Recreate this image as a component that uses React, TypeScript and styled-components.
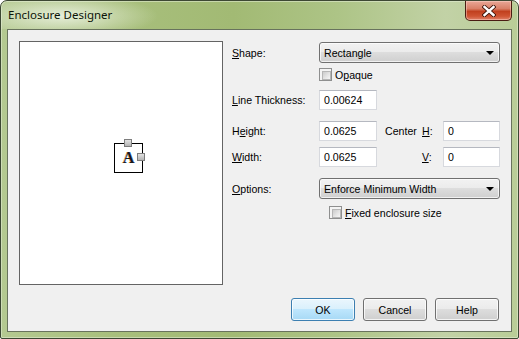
import React from "react";
import styled, { createGlobalStyle } from "styled-components";

const Global = createGlobalStyle`
  html, body { margin: 0; padding: 0; background: #ffffff; }
  body { font-family: "Liberation Sans", Arial, sans-serif; }
  * { box-sizing: border-box; }
`;

const Window = styled.div`
  width: 519px;
  height: 339px;
  border: 1px solid #3d4833;
  border-radius: 7px 7px 2px 2px;
  background: linear-gradient(90deg, #b4c991 0%, #a8bf7c 22%, #a2ba74 45%, #adc486 65%, #c2d2a6 86%, #b9cd97 100%);
  display: flex;
  flex-direction: column;
  overflow: hidden;
  box-shadow: inset 0 0 0 1px rgba(230, 238, 215, 0.55);
`;

const TitleBar = styled.div`
  height: 28px;
  display: flex;
  align-items: flex-start;
  justify-content: space-between;
  padding: 0 6px 0 7px;
  background: radial-gradient(ellipse 95px 22px at 62px 15px, rgba(236, 243, 226, 0.9), rgba(236, 243, 226, 0) 100%);
`;

const Title = styled.div`
  margin-top: 6px;
  font-family: "Noto Sans", "Open Sans", sans-serif;
  font-size: 11.5px;
  color: #0c1408;
`;

const CloseButton = styled.div`
  width: 47px;
  height: 20px;
  border: 1px solid #4a1d12;
  border-top: none;
  border-radius: 0 0 5px 5px;
  background: linear-gradient(180deg, #e9a797 0%, #d98068 40%, #c1401f 55%, #cf5433 80%, #e0826a 100%);
  box-shadow: inset 0 0 0 1px rgba(255, 220, 210, 0.45);
  display: flex;
  align-items: center;
  justify-content: center;
`;

const Client = styled.div`
  margin: 0 6px 6px 6px;
  flex: 1;
  border: 1px solid #68735d;
  background: #f0f0f0;
  padding: 11px 12px 10px 11px;
  display: flex;
  flex-direction: column;
  font-family: "Liberation Sans", Arial, sans-serif;
  font-size: 10.6px;
  color: #000;
`;

const TopArea = styled.div`
  display: flex;
  height: 244px;
`;

const Preview = styled.div`
  position: relative;
  flex-shrink: 0;
  width: 204px;
  height: 244px;
  background: #ffffff;
  border: 1px solid #646464;
`;

const Enclosure = styled.div`
  position: absolute;
  left: 94px;
  top: 101px;
  width: 29px;
  height: 30px;
  border: 1px solid #000;
  display: flex;
  align-items: center;
  justify-content: center;
  font-family: "Liberation Serif", "Times New Roman", serif;
  font-weight: bold;
  font-size: 16px;
  color: #1a1a1a;
  text-shadow: -0.6px 0 0 rgba(220, 120, 0, 0.6), 0.6px 0 0 rgba(0, 90, 220, 0.6);
`;

const Handle = styled.div<{ $x: number; $y: number }>`
  position: absolute;
  left: ${(p) => p.$x}px;
  top: ${(p) => p.$y}px;
  width: 8px;
  height: 8px;
  border: 1px solid #7d7d7d;
  background: linear-gradient(180deg, #e2e2e2 0%, #b4b4b4 100%);
`;

const Form = styled.div`
  margin-left: 9px;
  flex: 1;
  min-width: 0;
  display: flex;
  flex-direction: column;
`;

const Row = styled.div<{ $mt: number; $h: number }>`
  display: flex;
  align-items: center;
  margin-top: ${(p) => p.$mt}px;
  height: ${(p) => p.$h}px;
`;

const Label = styled.div`
  width: 87px;
  flex-shrink: 0;
  white-space: nowrap;
`;

const U = styled.span`
  text-decoration: underline;
  text-underline-offset: 1px;
`;

const Select = styled.div`
  width: 181px;
  flex-shrink: 0;
  height: 21px;
  border: 1px solid #707070;
  border-radius: 3px;
  background: linear-gradient(180deg, #f2f2f2 0%, #ebebeb 49%, #dddddd 50%, #cfcfcf 100%);
  box-shadow: inset 0 0 0 1px rgba(255, 255, 255, 0.7);
  display: flex;
  align-items: center;
  justify-content: space-between;
  padding: 0 5px 0 4px;
`;

const Arrow = styled.div`
  width: 0;
  height: 0;
  border-left: 4px solid transparent;
  border-right: 4px solid transparent;
  border-top: 4px solid #000;
  margin-top: 1px;
`;

const Input = styled.div<{ $w: number }>`
  width: ${(p) => p.$w}px;
  flex-shrink: 0;
  height: 20px;
  background: #fff;
  border: 1px solid #d7d9de;
  border-top-color: #b5b8c0;
  display: flex;
  align-items: center;
  padding-left: 4px;
`;

const CheckRow = styled.div<{ $mt: number; $ml: number }>`
  display: flex;
  align-items: center;
  margin-top: ${(p) => p.$mt}px;
  margin-left: ${(p) => p.$ml}px;
  height: 13px;
  gap: 3px;
  white-space: nowrap;
`;

const Box = styled.div`
  width: 13px;
  height: 13px;
  flex-shrink: 0;
  border: 1px solid #8e8f8f;
  background: #f4f4f4;
  padding: 2px;
  &::after {
    content: "";
    display: block;
    width: 7px;
    height: 7px;
    border: 1px solid #b6b6b6;
    background: linear-gradient(135deg, #cbcbcb 0%, #e6e6e6 60%, #f6f6f6 100%);
  }
`;

const CenterLabel = styled.div`
  margin-left: 8px;
  width: 37px;
  flex-shrink: 0;
`;

const AxisLabel = styled.div`
  width: 21px;
  flex-shrink: 0;
`;

const ButtonBar = styled.div`
  margin-top: 13px;
  display: flex;
  justify-content: flex-end;
  gap: 8px;
`;

const Button = styled.div<{ $default?: boolean }>`
  width: 64px;
  height: 23px;
  border-radius: 3px;
  border: 1px solid ${(p) => (p.$default ? "#3c7fb1" : "#707070")};
  background: ${(p) =>
    p.$default
      ? "linear-gradient(180deg, #eaf6fd 0%, #d9f0fc 49%, #bee6fd 50%, #a7d9f5 100%)"
      : "linear-gradient(180deg, #f2f2f2 0%, #ebebeb 49%, #dddddd 50%, #cfcfcf 100%)"};
  box-shadow: inset 0 0 0 1px rgba(255, 255, 255, 0.75);
  display: flex;
  align-items: center;
  justify-content: center;
`;

export default function App() {
  return (
    <>
      <Global />
      <Window>
        <TitleBar>
          <Title>Enclosure Designer</Title>
          <CloseButton>
            <svg width="14" height="12" viewBox="0 0 14 12">
              <path
                d="M2.5 2 L11.5 10 M11.5 2 L2.5 10"
                stroke="#3a1208"
                strokeWidth="4.2"
                strokeLinecap="square"
              />
              <path
                d="M2.5 2 L11.5 10 M11.5 2 L2.5 10"
                stroke="#ffffff"
                strokeWidth="2.4"
                strokeLinecap="square"
              />
            </svg>
          </CloseButton>
        </TitleBar>
        <Client>
          <TopArea>
            <Preview>
              <Enclosure>A</Enclosure>
              <Handle $x={104} $y={97} />
              <Handle $x={117} $y={111} />
            </Preview>
            <Form>
              <Row $mt={1} $h={21}>
                <Label>
                  <U>S</U>hape:
                </Label>
                <Select>
                  <span>Rectangle</span>
                  <Arrow />
                </Select>
              </Row>
              <CheckRow $mt={5} $ml={87}>
                <Box />
                <span>
                  O<U>p</U>aque
                </span>
              </CheckRow>
              <Row $mt={9} $h={20}>
                <Label>
                  <U>L</U>ine Thickness:
                </Label>
                <Input $w={58}>0.00624</Input>
              </Row>
              <Row $mt={11} $h={20}>
                <Label>
                  H<U>e</U>ight:
                </Label>
                <Input $w={58}>0.0625</Input>
                <CenterLabel>Center</CenterLabel>
                <AxisLabel>
                  <U>H</U>:
                </AxisLabel>
                <Input $w={57}>0</Input>
              </Row>
              <Row $mt={6} $h={20}>
                <Label>
                  <U>W</U>idth:
                </Label>
                <Input $w={58}>0.0625</Input>
                <CenterLabel />
                <AxisLabel>
                  <U>V</U>:
                </AxisLabel>
                <Input $w={57}>0</Input>
              </Row>
              <Row $mt={11} $h={21}>
                <Label>
                  <U>O</U>ptions:
                </Label>
                <Select>
                  <span>Enforce Minimum Width</span>
                  <Arrow />
                </Select>
              </Row>
              <CheckRow $mt={7} $ml={97}>
                <Box />
                <span>
                  <U>F</U>ixed enclosure size
                </span>
              </CheckRow>
            </Form>
          </TopArea>
          <ButtonBar>
            <Button $default>OK</Button>
            <Button>Cancel</Button>
            <Button>Help</Button>
          </ButtonBar>
        </Client>
      </Window>
    </>
  );
}
